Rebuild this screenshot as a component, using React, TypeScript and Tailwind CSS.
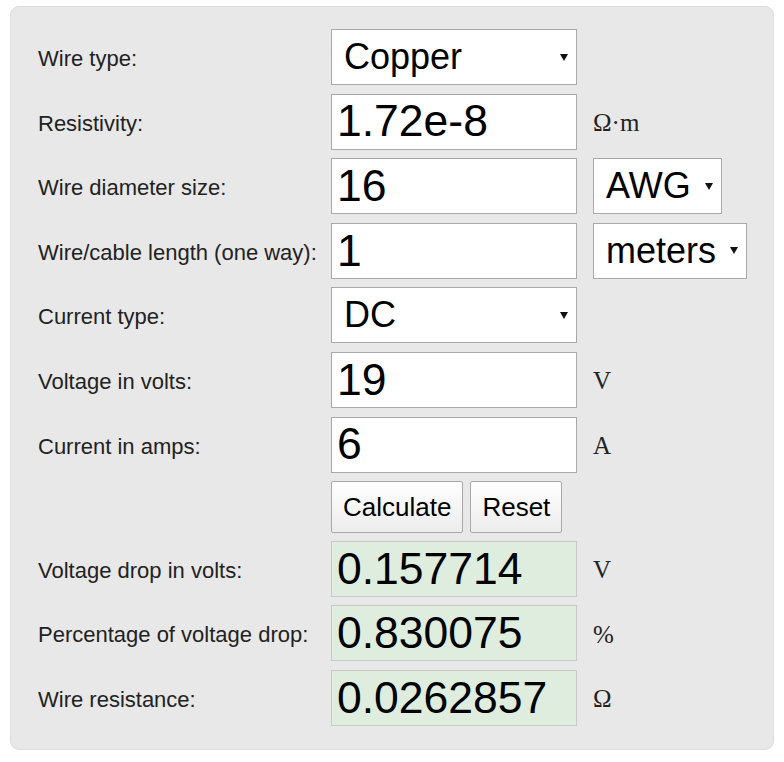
import React from "react";

const Arrow = () => (
  <svg width="8" height="7" viewBox="0 0 8 7" className="shrink-0">
    <path d="M0 0 L8 0 L4 7 Z" fill="#111" />
  </svg>
);

function Label({ children }: { children: React.ReactNode }) {
  return <div className="flex items-center h-[56px] pt-[3px] text-[22px] text-[#222]">{children}</div>;
}

function Select({ value, w }: { value: string; w: string }) {
  return (
    <div
      className={`flex items-center justify-between h-[56px] ${w} bg-white border border-[#a9a9a9] pl-[12px] pr-[8px] text-[36px] text-black leading-none`}
    >
      <span>{value}</span>
      <Arrow />
    </div>
  );
}

function Input({ value, result }: { value: string; result?: boolean }) {
  return (
    <div
      className={`flex items-center h-[56px] w-[246px] border ${
        result ? "bg-[#dfeddf] border-[#c8c8c8]" : "bg-white border-[#a9a9a9]"
      } pl-[5px] text-[44.5px] text-black leading-none`}
    >
      {value}
    </div>
  );
}

function Unit({ children }: { children?: React.ReactNode }) {
  return (
    <div
      className="flex items-center h-[56px] pl-[16px] pt-[2px] text-[25px] text-[#222]"
      style={{ fontFamily: '"Liberation Serif", "DejaVu Serif", serif' }}
    >
      {children}
    </div>
  );
}

export default function App() {
  return (
    <div
      className="w-[784px] h-[762px] bg-white pt-[6px] pl-[10px]"
      style={{ fontFamily: '"Liberation Sans", Arial, sans-serif' }}
    >
      <div className="w-[764px] h-[744px] bg-[#e8e8e8] border border-[#dcdcdc] rounded-[9px] pt-[22px] pl-[27px]">
        <div className="grid grid-cols-[293px_246px_1fr] gap-y-[8.6px]">
          <Label>Wire type:</Label>
          <Select value="Copper" w="w-[246px]" />
          <Unit />

          <Label>Resistivity:</Label>
          <Input value="1.72e-8" />
          <Unit>Ω·m</Unit>

          <Label>Wire diameter size:</Label>
          <Input value="16" />
          <div className="flex items-center pl-[16px]">
            <Select value="AWG" w="w-[129px]" />
          </div>

          <Label>Wire/cable length (one way):</Label>
          <Input value="1" />
          <div className="flex items-center pl-[16px]">
            <Select value="meters" w="w-[154px]" />
          </div>

          <Label>Current type:</Label>
          <Select value="DC" w="w-[246px]" />
          <Unit />

          <Label>Voltage in volts:</Label>
          <Input value="19" />
          <Unit>V</Unit>

          <Label>Current in amps:</Label>
          <Input value="6" />
          <Unit>A</Unit>

          <div className="h-[51px]" />
          <div className="flex gap-[7px] h-[51px]">
            <button className="h-[52px] px-[11px] border border-[#a9a9a9] rounded-[2px] bg-gradient-to-b from-white to-[#ececec] text-[26px] text-black leading-none">
              Calculate
            </button>
            <button className="h-[52px] px-[11px] border border-[#a9a9a9] rounded-[2px] bg-gradient-to-b from-white to-[#ececec] text-[26px] text-black leading-none">
              Reset
            </button>
          </div>
          <div />

          <Label>Voltage drop in volts:</Label>
          <Input value="0.157714" result />
          <Unit>V</Unit>

          <Label>Percentage of voltage drop:</Label>
          <Input value="0.830075" result />
          <Unit>%</Unit>

          <Label>Wire resistance:</Label>
          <Input value="0.0262857" result />
          <Unit>Ω</Unit>
        </div>
      </div>
    </div>
  );
}
